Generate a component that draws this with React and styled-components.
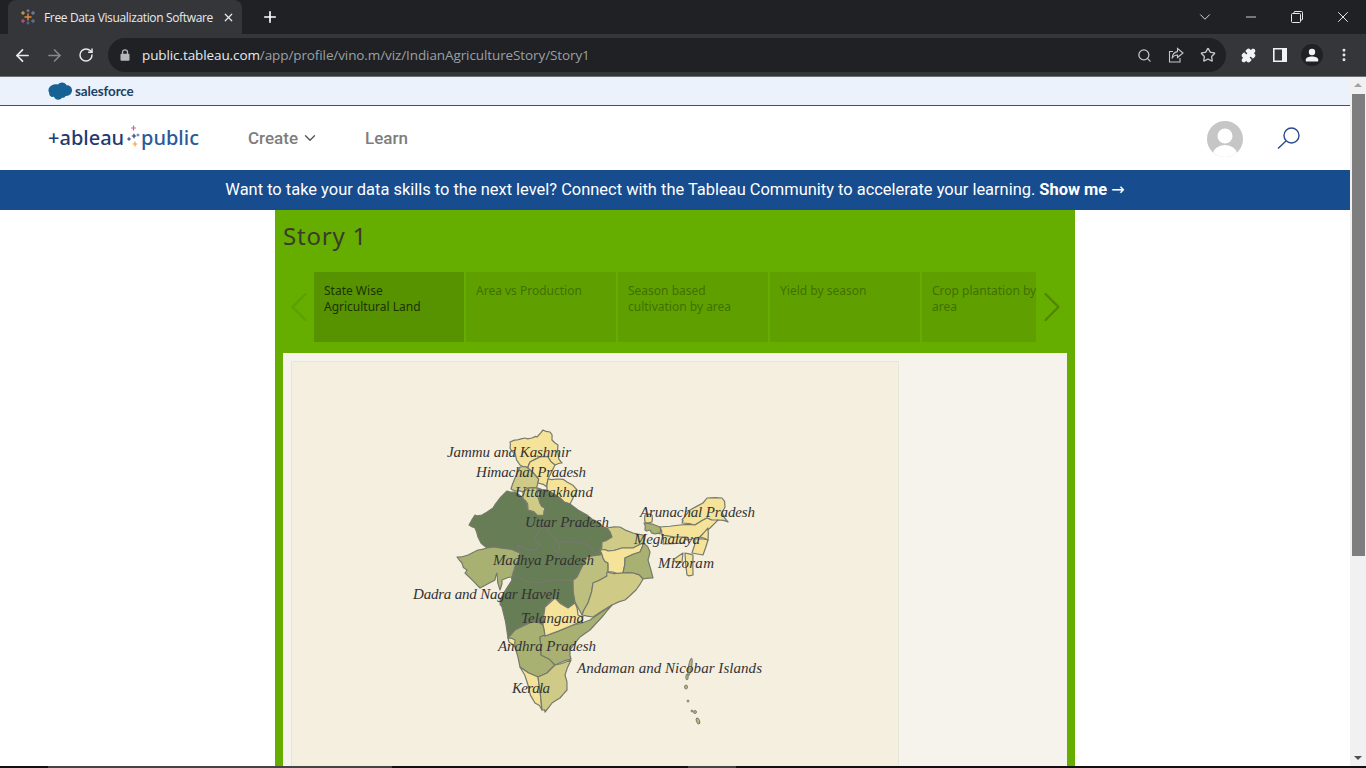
import React from 'react';
import styled, { createGlobalStyle } from 'styled-components';
import {
  ArrowLeft, ArrowRight, RotateCw, Search, Star, Puzzle, X, Plus,
  ChevronDown, ChevronLeft, ChevronRight, Minus, EllipsisVertical
} from 'lucide-react';

const GlobalStyle = createGlobalStyle`
  html, body { margin: 0; padding: 0; overflow: hidden; background: #fff; }
  * { box-sizing: border-box; }
`;

const Screen = styled.div`
  width: 1366px;
  height: 768px;
  display: flex;
  flex-direction: column;
  overflow: hidden;
  font-family: Roboto, "Liberation Sans", sans-serif;
`;

/* browser chrome */
const TabStrip = styled.div`
  height: 34px;
  flex: none;
  display: flex;
  align-items: flex-end;
  background: #202124;
  color: #e8eaed;
`;

const Tab = styled.div`
  width: 234px;
  height: 34px;
  margin-left: 8px;
  padding: 0 5px 0 12px;
  display: flex;
  align-items: center;
  background: #35363a;
  border-radius: 8px 8px 0 0;
`;

const TabTitle = styled.span`
  width: 170px;
  margin-left: 8px;
  font-family: "Open Sans", sans-serif;
  font-size: 12px;
  letter-spacing: -0.35px;
  white-space: nowrap;
`;

const TabClose = styled.span`
  margin-left: 8px;
  display: flex;
`;

const NewTab = styled.span`
  display: flex;
  margin: 0 0 8px 19px;
`;

const WindowControls = styled.div`
  margin-left: auto;
  height: 34px;
  display: flex;
  align-items: center;
`;

const WindowButton = styled.span`
  width: 46px;
  display: flex;
  justify-content: center;
  align-items: center;
`;

const Toolbar = styled.div`
  height: 43px;
  flex: none;
  padding: 4px 0 4px 6px;
  display: flex;
  align-items: flex-start;
  background: #35363a;
  border-bottom: 1px solid #6e6f72;
  color: #dadce0;
`;

const ToolButton = styled.span`
  width: 32px;
  height: 34px;
  display: flex;
  align-items: center;
  justify-content: center;
  flex: none;
  color: ${p => p.$dim ? '#87888b' : '#e8eaed'};
`;

const Omnibox = styled.div`
  width: 1118px;
  height: 34px;
  margin: 0 6px 0 6px;
  padding: 0 2px 0 12px;
  display: flex;
  align-items: center;
  background: #202124;
  border-radius: 17px;
  flex: none;
`;

const Url = styled.span`
  margin-left: 12px;
  font-family: "Open Sans", sans-serif;
  font-size: 13.500px;
  letter-spacing: -0.1px;
  color: #9aa0a6;
  white-space: nowrap;
  strong { font-weight: 400; color: #e8eaed; }
`;

const OmniIcons = styled.div`
  margin-left: auto;
  display: flex;
`;

const ProfileDot = styled.span`
  width: 22px;
  height: 22px;
  border-radius: 50%;
  background: #202124;
  display: flex;
  align-items: center;
  justify-content: center;
`;

/* page */
const PageRow = styled.div`
  flex: 1;
  min-height: 0;
  display: flex;
`;

const Page = styled.main`
  flex: 1;
  min-width: 0;
  display: flex;
  flex-direction: column;
  overflow: hidden;
  background: #fff;
`;

const Scrollbar = styled.div`
  width: 16px;
  flex: none;
  display: flex;
  flex-direction: column;
  align-items: center;
  background: #f1f1f1;
`;

const ScrollArrow = styled.span`
  width: 0;
  height: 0;
  flex: none;
  margin: ${p => p.$down ? '0 0 6px' : '6px 0 6px'};
  border-left: 4px solid transparent;
  border-right: 4px solid transparent;
  border-bottom: ${p => p.$down ? '0' : '4px solid #a3a3a3'};
  border-top: ${p => p.$down ? '4px solid #505050' : '0'};
`;

const ScrollThumb = styled.span`
  width: 13px;
  height: 462px;
  margin-left: 1px;
  margin-top: 1px;
  flex: none;
  background: #7e7e7e;
`;

const ScrollTrack = styled.span`
  flex: 1;
`;

const Taskbar = styled.div`
  height: 2px;
  flex: none;
  display: flex;
  background: #111;
`;

const TaskSlot = styled.span`
  height: 2px;
  width: ${p => p.$w}px;
  background: ${p => p.$on ? '#444' : 'transparent'};
`;

const SalesforceBar = styled.div`
  height: 29px;
  flex: none;
  padding-left: 48px;
  display: flex;
  align-items: center;
  gap: 3px;
  background: #ecf2fb;
  border-bottom: 1px solid #1c5c85;
`;

const SalesforceText = styled.span`
  font-family: Lato, sans-serif;
  font-weight: 700;
  font-size: 13.400px;
  letter-spacing: -0.1px;
  color: #1b3f66;
`;

const Nav = styled.nav`
  height: 64px;
  flex: none;
  padding: 0 49px 0 48px;
  display: flex;
  align-items: center;
`;

const Logo = styled.div`
  width: 149px;
  height: 30px;
  flex: none;
  display: flex;
  align-items: center;
  font-family: "Noto Sans", sans-serif;
  font-weight: 500;
  font-size: 20px;
  line-height: 30px;
  white-space: nowrap;
`;

const LogoWord = styled.span`
  color: ${p => p.$color};
  width: ${p => p.$w}px;
  flex: none;
`;

const LogoMark = styled.svg`
  flex: none;
`;

const NavLink = styled.a`
  display: flex;
  align-items: center;
  gap: 3px;
  margin-left: ${p => p.$gap}px;
  font-family: Roboto, sans-serif;
  font-weight: 500;
  font-size: 17px;
  color: #7d7d7d;
`;

const UserAvatar = styled.span`
  margin-left: auto;
  margin-right: 34px;
  margin-top: 1px;
  display: flex;
`;

const Banner = styled.div`
  height: 40px;
  flex: none;
  padding-bottom: 1px;
  display: flex;
  align-items: center;
  justify-content: center;
  background: #174c8f;
  color: #fff;
  font-family: Roboto, sans-serif;
  font-size: 16.450px;
  strong { margin-left: 4px; font-weight: 700; }
`;

const BannerArrow = styled.span`
  margin-left: 4px;
  font-family: "DejaVu Sans", sans-serif;
  font-size: 16px;
`;

const StoryWrap = styled.section`
  width: 800px;
  flex: 1;
  margin-left: 275px;
  padding: 0 8px;
  display: flex;
  flex-direction: column;
  background: #65ae00;
`;

const StoryTitle = styled.h1`
  height: 53px;
  margin: 0;
  flex: none;
  font-family: "Noto Sans", sans-serif;
  font-weight: 400;
  font-size: 24px;
  line-height: 52px;
  letter-spacing: 0.8px;
  color: #3b3b2b;
`;

const Navigator = styled.div`
  height: 70px;
  margin-top: 9px;
  flex: none;
  display: flex;
  align-items: center;
`;

const Arrow = styled.span`
  width: 31px;
  display: flex;
  justify-content: center;
  flex: none;
  color: ${p => p.$on ? '#4f8500' : '#5aa000'};
  svg { flex: none; }
`;

const Cards = styled.div`
  width: 722px;
  height: 70px;
  display: flex;
  gap: 2px;
  overflow: hidden;
  flex: none;
`;

const Card = styled.div`
  width: 150px;
  height: 70px;
  flex: none;
  padding: 11px 0 0 10px;
  background: ${p => p.$active ? '#579200' : '#5fa000'};
  color: ${p => p.$active ? '#1c3300' : '#417000'};
  font-family: "Noto Sans", sans-serif;
  font-size: 12px;
  line-height: 16px;
  white-space: pre-line;
`;

const VizPanel = styled.div`
  flex: 1;
  margin-top: 11px;
  padding: 8px 0 0 8px;
  min-height: 0;
  background: #f6f2ec;
`;

const MapPanel = styled.div`
  width: 608px;
  height: 420px;
  background: #f5efe0;
  border: 1px solid #e8e5da;
`;

const MapSvg = styled.svg`
  display: block;
`;

const Region = styled.polygon`
  fill: ${p => p.$fill};
  stroke: #75796b;
  stroke-width: 1.200;
  stroke-linejoin: round;
`;

const Isle = styled.ellipse`
  fill: #b9b57e;
  stroke: #6d6f63;
  stroke-width: 0.8;
`;

const MapLabel = styled.text`
  font-family: "Liberation Serif", serif;
  font-style: italic;
  font-size: 15px;
  fill: #333;
`;

const DARK = '#667d55';
const MID = '#a9b172';
const SOFT = '#bcbf7d';
const LIGHT = '#cfcb87';
const PALE = '#f6e39a';

const regions = [
  [PALE, '510,442 517,440 525,438 532,438 537,437 543,430 550,432 552,440 558,445 558,453 562,463 555,465 548,457 540,457 530,462 528,467 520,465 515,453 510,448'],
  [LIGHT, '520,467 528,468 537,477 538,483 537,488 528,488 523,492 515,491 511,489 515,478'],
  [PALE, '530,462 540,457 548,457 555,465 548,479 547,487 538,483 537,477 528,468'],
  [PALE, '548,479 557,479 567,482 577,490 573,498 570,504 560,498 547,490'],
  [DARK, '507,491 515,492 523,498 528,510 537,515 544,515 542,527 535,537 540,545 533,552 528,550 518,545 520,553 500,548 487,548 478,537 475,528 469,525 475,515 482,515 493,508 500,498'],
  [LIGHT, '523,492 528,488 537,488 540,503 545,508 544,515 537,515 528,510 525,500 523,498'],
  [DARK, '538,488 547,490 560,498 570,504 587,515 600,523 607,528 612,537 602,542 600,555 590,548 585,543 573,543 560,542 558,553 553,547 558,540 553,537 547,528 542,527 544,515 545,508 540,503'],
  [MID, '457,557 468,555 478,550 487,548 500,548 520,553 515,567 512,577 502,580 500,590 497,573 495,580 480,588 465,573 467,570 462,563'],
  [DARK, '520,553 518,545 528,550 533,552 540,545 535,537 542,527 547,528 553,537 558,540 553,547 558,553 560,542 573,543 585,543 590,548 600,555 587,557 577,577 573,580 550,580 533,583 513,575 515,567'],
  [DARK, '513,575 512,580 500,600 502,607 508,638 515,630 532,622 543,625 545,607 553,598 568,608 575,602 573,580 550,580 533,583'],
  [SOFT, '577,577 587,557 600,555 602,542 612,537 600,548 603,558 608,563 608,572 607,576 593,583 588,603 582,615 575,602 573,580'],
  [LIGHT, '607,528 620,527 633,533 643,535 643,543 633,548 622,548 608,551 600,550 600,555 602,542 612,537'],
  [PALE, '600,550 608,551 622,548 633,548 643,543 640,552 625,558 623,573 613,572 608,572 608,563 603,558'],
  [MID, '643,543 650,552 648,560 653,578 643,579 633,573 623,573 625,558 640,552'],
  [MID, '644,523 660,527 660,534 655,534 650,530 645,530'],
  [PALE, '645,515 652,515 652,522 645,522'],
  [LIGHT, '607,572 623,573 633,573 643,579 636,590 625,600 612,605 593,617 582,615 588,603 593,583 607,576'],
  [MID, '508,638 515,630 532,622 543,625 545,636 540,637 541,655 555,665 547,673 538,677 520,667 515,647'],
  [MID, '545,636 573,625 590,620 612,605 602,617 590,630 580,637 570,650 571,659 555,665 541,655 540,637'],
  [PALE, '555,598 568,608 575,603 578,615 583,620 573,625 545,636 543,625 545,607'],
  [PALE, '508,638 515,640 515,647 512,644'],
  [PALE, '520,667 538,677 542,710 535,703 528,685'],
  [LIGHT, '538,677 547,673 555,665 571,660 565,675 567,690 560,698 552,703 545,712 542,710'],
  [PALE, '682,520 690,510 703,503 707,498 722,498 725,507 722,512 728,522 718,520 713,522 707,518 695,525 682,523'],
  [PALE, '660,527 680,525 695,525 707,518 718,520 710,528 700,537 688,540 662,535'],
  [PALE, '662,535 687,537 683,543 663,544'],
  [PALE, '708,528 700,537 708,540'],
  [PALE, '695,539 708,540 703,555 692,553'],
  [PALE, '685,553 693,555 693,575 687,575'],
  [PALE, '673,560 683,553 682,562 677,563']
];

// state borders are noisy in the original, so nudge each edge midpoint
// (same nudge for both states sharing that edge)
const nudge = (a, b) => {
  const seed = (a[0] + b[0]) * 12.9898 + (a[1] + b[1]) * 78.233;
  const n = Math.sin(seed) * 43758.5453;
  return (n - Math.floor(n) - 0.5) * 2.4;
};

const roughen = points => {
  const pts = points.split(' ').map(p => p.split(',').map(Number));
  return pts.map((p, i) => {
    const q = pts[(i + 1) % pts.length];
    const d = nudge(p, q);
    return `${p[0]},${p[1]} ${(p[0] + q[0]) / 2 + d},${(p[1] + q[1]) / 2 - d}`;
  }).join(' ');
};

const isles = [
  { cx: 690, cy: 667, rx: 1.6, ry: 9, r: 10 },
  { cx: 687, cy: 677, rx: 1.2, ry: 3, r: 0 },
  { cx: 686, cy: 687, rx: 1.5, ry: 2, r: 0 },
  { cx: 688, cy: 701, rx: 1, ry: 1, r: 0 },
  { cx: 692, cy: 711, rx: 1, ry: 1, r: 0 },
  { cx: 695, cy: 712, rx: 1.5, ry: 1.5, r: 0 },
  { cx: 698, cy: 721, rx: 1.6, ry: 3.2, r: -20 }
];

const labels = [
  ['Jammu and Kashmir', 447, 457, 124],
  ['Himachal Pradesh', 476, 477, 110],
  ['Uttarakhand', 515, 497, 78],
  ['Uttar Pradesh', 525, 527, 84],
  ['Arunachal Pradesh', 640, 517, 115],
  ['Meghalaya', 634, 544, 66],
  ['Madhya Pradesh', 493, 565, 101],
  ['Mizoram', 658, 568, 56],
  ['Dadra and Nagar Haveli', 413, 599, 147],
  ['Telangana', 521, 623, 63],
  ['Andhra Pradesh', 498, 651, 98],
  ['Andaman and Nicobar Islands', 577, 673, 185],
  ['Kerala', 512, 693, 38]
];

const stories = [
  { title: 'State Wise\nAgricultural Land', active: true },
  { title: 'Area vs Production' },
  { title: 'Season based\ncultivation by area' },
  { title: 'Yield by season' },
  { title: 'Crop plantation by\narea' }
];

const Sparkle = ({ x, y, s, c, w = 1.4 }) => (
  <path d={`M${x - s} ${y}H${x + s}M${x} ${y - s}V${y + s}`} stroke={c} strokeWidth={w} fill="none" />
);

const Favicon = () => (
  <svg width="16" height="16" viewBox="0 0 16 16">
    <Sparkle x={8} y={8} s={3.5} c="#e8883a" />
    <Sparkle x={3} y={4} s={2} c="#e8b04a" w={1} />
    <Sparkle x={8} y={1.8} s={1.6} c="#7d8aa8" w={1} />
    <Sparkle x={13} y={4} s={2} c="#7d8aa8" w={1} />
    <Sparkle x={3} y={12} s={2} c="#d8558f" w={1} />
    <Sparkle x={8} y={14} s={1.6} c="#5b6fb0" w={1} />
    <Sparkle x={13} y={12} s={2} c="#6d7fa8" w={1} />
  </svg>
);

const RestoreIcon = () => (
  <svg width="12" height="12" viewBox="0 0 12 12" fill="none" stroke="#e8eaed" strokeWidth="1">
    <rect x="0.5" y="2.5" width="9" height="9" rx="1" />
    <path d="M3 2.5V1.5a1 1 0 0 1 1-1h6.5a1 1 0 0 1 1 1V8a1 1 0 0 1-1 1H9.5" />
  </svg>
);

const LockIcon = () => (
  <svg width="10" height="12" viewBox="0 0 10 12">
    <path fill="none" stroke="#b5b8bb" strokeWidth="1.300" d="M2.500 5V3.300a2.500 2.500 0 0 1 5 0V5" />
    <rect x="0.500" y="4.800" width="9" height="7" rx="1" fill="#b5b8bb" />
  </svg>
);

const ShareIcon = () => (
  <svg width="16" height="16" viewBox="0 0 16 16" fill="none" stroke="#c4c7ca" strokeWidth="1.1">
    <path d="M5 4.500H1.500V15H12V11" />
    <path d="M9.500 1.500L15 6l-5.500 4.500V8C7 8 5.200 9 4 11.500 4.300 7.500 6.500 5 9.500 4.600z" />
  </svg>
);

const SidePanelIcon = () => (
  <svg width="14" height="14" viewBox="0 0 14 14">
    <path fill="#f1f3f4" fillRule="evenodd" d="M0 0H14V14H0ZM1.600 1.600V12.400H9V1.600Z" />
  </svg>
);

const ProfileIcon = () => (
  <svg width="14" height="14" viewBox="0 0 14 14" fill="#f1f3f4">
    <circle cx="7" cy="4" r="3.200" />
    <path d="M0.800 13.500V11.500C0.800 9.500 4 8.400 7 8.400s6.200 1.100 6.200 3.100v2z" />
  </svg>
);

const SalesforceCloud = () => (
  <svg width="24" height="18" viewBox="0 0 24 18">
    <path
      fill="#166295"
      d="M10 2.500C11 1.200 12.400 .5 14 .5c2 0 3.700 1 4.500 2.700C22 3 24 5.500 24 8.300c0 3.400-3 6-6.300 5.600-.8 1.300-2.200 2-3.700 1.900-1 1.500-3.300 2.400-5 1.800-1.500-.4-2.500-1.500-3-2.800C3 15.500 .8 13.500 1.300 11 .2 9.500 0 7 1.500 5.300 3.200 3 6 1.500 10 2.500z"
    />
  </svg>
);

const LogoSparkles = () => (
  <LogoMark width="14" height="30" viewBox="0 0 14 30">
    <Sparkle x={6.500} y={5} s={2.400} c="#d6609a" w={1.200} />
    <Sparkle x={2} y={16} s={1.800} c="#1f3a73" w={1.100} />
    <Sparkle x={7} y={13} s={2.200} c="#1f3a73" w={1.200} />
    <Sparkle x={11} y={12} s={1.400} c="#3c6aa8" w={1} />
    <Sparkle x={8} y={21} s={2.400} c="#eea24a" w={1.200} />
  </LogoMark>
);

const UserIcon = () => (
  <svg width="36" height="36" viewBox="0 0 36 36">
    <clipPath id="user-clip"><circle cx="18" cy="18" r="18" /></clipPath>
    <g clipPath="url(#user-clip)">
      <rect width="36" height="36" fill="#c6c6c6" />
      <circle cx="18" cy="15" r="7.500" fill="#fff" />
      <ellipse cx="18" cy="33" rx="12" ry="9" fill="#fff" />
    </g>
  </svg>
);

const SearchLarge = () => (
  <svg width="24" height="23" viewBox="0 0 24 23" fill="none" stroke="#2b4a8b" strokeWidth="1.400">
    <circle cx="14.500" cy="8.500" r="7.500" />
    <path d="M9 14L1 21.500" />
  </svg>
);

const App = () => (
  <Screen>
    <GlobalStyle />
    <TabStrip>
      <Tab>
        <Favicon />
        <TabTitle>Free Data Visualization Software</TabTitle>
        <TabClose><X size={13} strokeWidth={2.200} /></TabClose>
      </Tab>
      <NewTab><Plus size={18} strokeWidth={2.200} color="#fff" /></NewTab>
      <WindowControls>
        <WindowButton><ChevronDown size={18} strokeWidth={1.200} /></WindowButton>
        <WindowButton><Minus size={16} strokeWidth={1.300} /></WindowButton>
        <WindowButton><RestoreIcon /></WindowButton>
        <WindowButton><X size={18} strokeWidth={1.300} /></WindowButton>
      </WindowControls>
    </TabStrip>
    <Toolbar>
      <ToolButton><ArrowLeft size={19} strokeWidth={2.200} /></ToolButton>
      <ToolButton $dim><ArrowRight size={19} strokeWidth={2} /></ToolButton>
      <ToolButton><RotateCw size={16} strokeWidth={2.200} /></ToolButton>
      <Omnibox>
        <LockIcon />
        <Url><strong>public.tableau.com</strong>/app/profile/vino.m/viz/IndianAgricultureStory/Story1</Url>
        <OmniIcons>
          <ToolButton><Search size={15} color="#c4c7ca" /></ToolButton>
          <ToolButton><ShareIcon /></ToolButton>
          <ToolButton><Star size={16} strokeWidth={2} color="#c4c7ca" /></ToolButton>
        </OmniIcons>
      </Omnibox>
      <ToolButton><Puzzle size={15} fill="#f1f3f4" color="#f1f3f4" /></ToolButton>
      <ToolButton><SidePanelIcon /></ToolButton>
      <ToolButton><ProfileDot><ProfileIcon /></ProfileDot></ToolButton>
      <ToolButton><EllipsisVertical size={16} strokeWidth={2.400} /></ToolButton>
    </Toolbar>
    <PageRow>
      <Page>
        <SalesforceBar>
          <SalesforceCloud />
          <SalesforceText>salesforce</SalesforceText>
        </SalesforceBar>
        <Nav>
          <Logo>
            <LogoWord $color="#1f3a73" $w={79}>+ableau</LogoWord>
            <LogoSparkles />
            <LogoWord $color="#2a5a9c" $w={56}>public</LogoWord>
          </Logo>
          <NavLink $gap={51}>Create <ChevronDown size={18} strokeWidth={1.800} color="#555" /></NavLink>
          <NavLink $gap={46}>Learn</NavLink>
          <UserAvatar><UserIcon /></UserAvatar>
          <SearchLarge />
        </Nav>
        <Banner>
          Want to take your data skills to the next level? Connect with the Tableau Community to accelerate your learning.
          <strong>Show me</strong>
          <BannerArrow>→</BannerArrow>
        </Banner>
        <StoryWrap>
          <StoryTitle>Story 1</StoryTitle>
          <Navigator>
            <Arrow><ChevronLeft size={52} strokeWidth={1} /></Arrow>
            <Cards>
              { stories.map(s => (
                <Card key={s.title} $active={s.active}>{s.title}</Card>
              )) }
            </Cards>
            <Arrow $on><ChevronRight size={52} strokeWidth={1} /></Arrow>
          </Navigator>
          <VizPanel>
            <MapPanel>
              <MapSvg width="606" height="418" viewBox="292 362 606 418">
                { regions.map(([fill, points]) => (
                  <Region key={points} $fill={fill} points={roughen(points)} />
                )) }
                { isles.map(i => (
                  <Isle
                    key={`${i.cx}_${i.cy}`}
                    cx={i.cx}
                    cy={i.cy}
                    rx={i.rx}
                    ry={i.ry}
                    transform={`rotate(${i.r} ${i.cx} ${i.cy})`}
                  />
                )) }
                { labels.map(([text, x, y, len]) => (
                  <MapLabel key={text} x={x} y={y} textLength={len}>{text}</MapLabel>
                )) }
              </MapSvg>
            </MapPanel>
          </VizPanel>
        </StoryWrap>
      </Page>
      <Scrollbar>
        <ScrollArrow />
        <ScrollThumb />
        <ScrollTrack />
        <ScrollArrow $down />
      </Scrollbar>
    </PageRow>
    <Taskbar>
      <TaskSlot $w={48} />
      <TaskSlot $w={344} $on />
      <TaskSlot $w={296} />
      <TaskSlot $w={48} $on />
    </Taskbar>
  </Screen>
);

export default App;
